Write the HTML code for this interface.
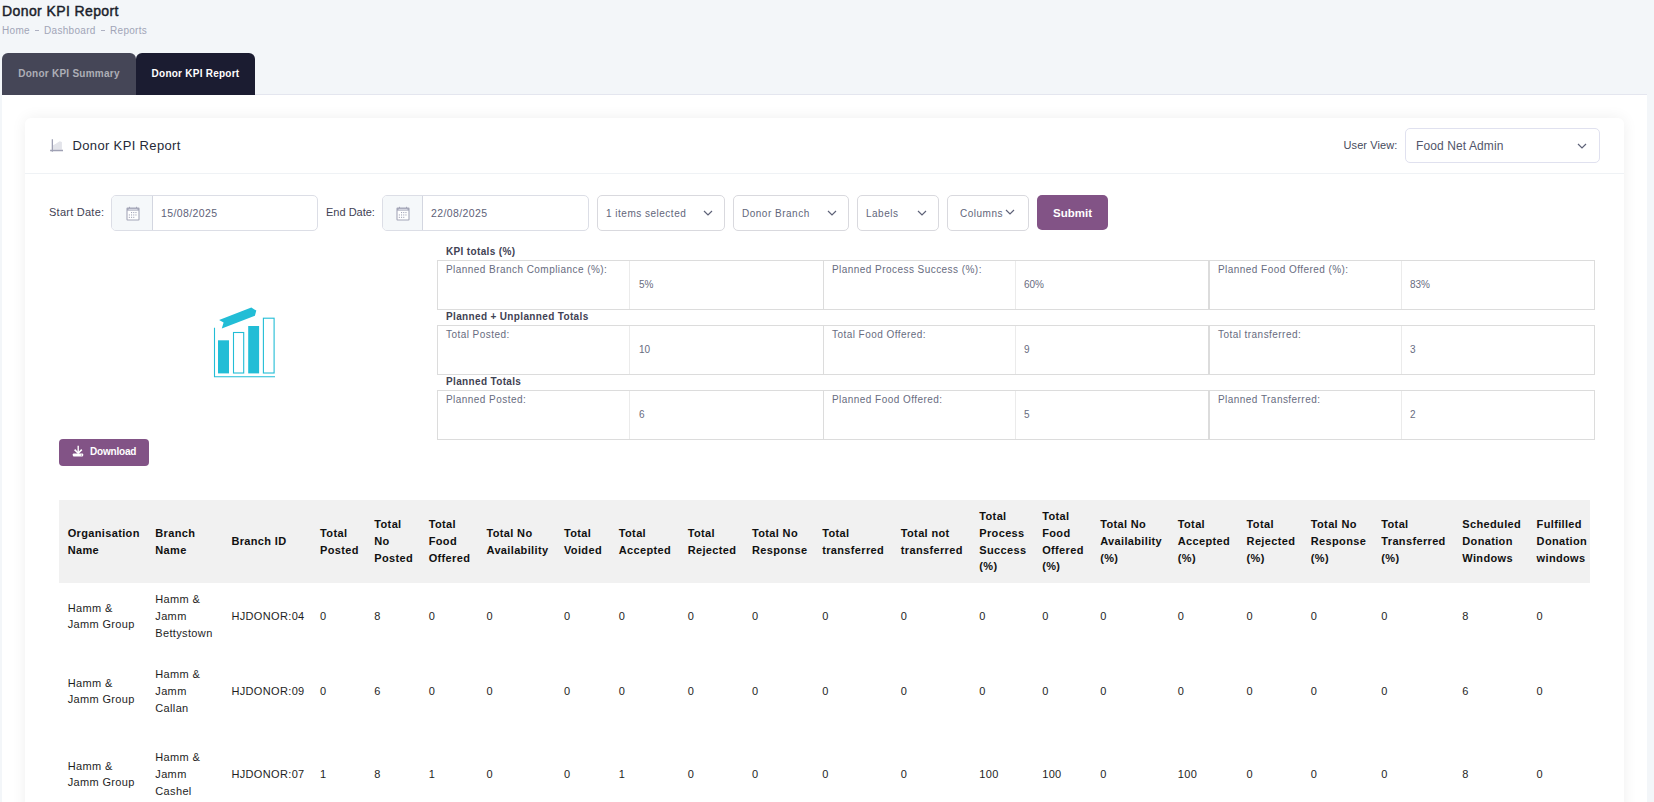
<!DOCTYPE html>
<html><head><meta charset="utf-8">
<style>
*{box-sizing:border-box;margin:0;padding:0}
html,body{width:1654px;height:802px;overflow:hidden}
body{background:#f3f6f9;font-family:"Liberation Sans",sans-serif;position:relative;color:#3f4254}
.abs{position:absolute;white-space:nowrap}
#title{left:2px;top:3px;font-size:14px;font-weight:normal;color:#1b1e2b;line-height:17px;-webkit-text-stroke:0.45px #1b1e2b;letter-spacing:0.4px}
.bc{top:25.2px;font-size:10px;color:#a1a5b7;line-height:12px;letter-spacing:0.3px}
.tab{position:absolute;top:53px;height:42px;border-radius:6px 6px 0 0;font-size:10px;font-weight:bold;line-height:42.4px;text-align:center;letter-spacing:0.25px}
#tab1{left:2px;width:134px;background:#454657;color:#adaeb6}
#tab2{left:136px;width:119px;background:#1b1c31;color:#fff}
#panel{position:absolute;left:2px;top:95px;width:1645px;height:720px;background:#fff}
#tabline{position:absolute;left:255px;top:94px;width:1392px;height:1px;background:#e4e6ef}
#card{position:absolute;left:25px;top:118px;width:1599px;height:700px;background:#fff;border-radius:6px;box-shadow:0 0 15px 0 rgba(0,0,0,.065)}
#chead{position:absolute;left:0;top:0;width:1599px;height:56px;border-bottom:1px solid #eff2f5}

.lbl{font-size:11px;color:#3f4254;line-height:14px;letter-spacing:0.25px}
.sel{position:absolute;top:195px;height:36px;border:1px solid #d9d9de;border-radius:5px;background:#fff}
.sel span{position:absolute;left:8px;top:11px;font-size:10px;line-height:13px;color:#62667a;white-space:nowrap;letter-spacing:0.5px}
.chev{position:absolute;top:14px;width:10px;height:6px;margin-left:-0.6px}
.grp{position:absolute;top:195px;height:36px;border:1px solid #dcdee6;border-radius:5px;background:#fff;overflow:hidden}
.addon{position:absolute;left:0;top:0;width:40px;height:34px;background:#f5f8fa;border-right:1px solid #d3d6e0}
.addon svg{position:absolute;left:12.5px;top:9.5px}
.grp span{position:absolute;left:48px;top:11px;font-size:10.5px;line-height:13px;color:#5e6278;letter-spacing:0.4px}
.btn{position:absolute;background:#825386;color:#fff;font-weight:bold;border-radius:5px;text-align:center}

.kh{position:absolute;left:446px;font-size:10px;font-weight:bold;line-height:12px;letter-spacing:0.35px;color:#3f4254;white-space:nowrap}
.kt{position:absolute;left:437px;width:1158px;height:50px;border:1px solid #dcdcdc;background:#fff}
.kt .v{position:absolute;top:0;width:1px;height:48px;background:#ebebeb}
.kt .d{position:absolute;top:0;width:1px;height:48px;background:#dcdcdc}
.kt .l{position:absolute;top:2.5px;font-size:10px;line-height:12px;letter-spacing:0.45px;color:#686c80;white-space:nowrap}
.kt .n{position:absolute;top:18.3px;font-size:10px;line-height:12px;color:#686c80;white-space:nowrap}

.th{position:absolute;top:500px;height:83px;display:flex;align-items:center;font-size:11px;font-weight:bold;line-height:16.8px;color:#101010;white-space:nowrap;letter-spacing:0.35px}
.td{position:absolute;display:flex;align-items:center;font-size:11px;line-height:17px;color:#1e1e1e;white-space:nowrap;letter-spacing:0.35px;padding-bottom:0.6px}
</style></head><body>
<div id="title" class="abs">Donor KPI Report</div>
<div class="abs bc" style="left:2px">Home</div><div class="abs" style="left:35px;top:29.5px;width:4px;height:1.6px;background:#aeb1c2"></div><div class="abs bc" style="left:44px">Dashboard</div><div class="abs" style="left:101px;top:29.5px;width:4px;height:1.6px;background:#aeb1c2"></div><div class="abs bc" style="left:110px">Reports</div>
<div id="tab1" class="tab">Donor KPI Summary</div>
<div id="tab2" class="tab">Donor KPI Report</div>
<div id="tabline"></div>
<div id="panel"></div>
<div id="card">
  <div id="chead"></div>
</div>

<svg class="abs" style="left:49px;top:138px" width="16" height="16" viewBox="0 0 16 16"><path d="M4 11.8 L4 7.2 C6 6.5 8 5 9.6 4 L10.8 3.3 L12.9 4 L12.9 11.8 Z" fill="#e3e4ea"/><path d="M3.36 1.3 L3.36 13.8 M1.1 12.5 L14 12.5" stroke="#9fa1b4" stroke-width="1.3" fill="none"/></svg>
<div class="abs" style="left:72.5px;top:138px;font-size:13px;line-height:15px;color:#262a38;letter-spacing:0.35px">Donor KPI Report</div>
<div class="abs lbl" style="left:1343.5px;top:138px;letter-spacing:0.1px;color:#464a5c">User View:</div>
<div class="sel" style="left:1405px;top:128px;width:195px;height:35px;border-color:#e0e1ef"><span style="top:9.6px;left:10px;font-size:12px;line-height:14px;color:#52566a;letter-spacing:0.1px">Food Net Admin</span><svg class="chev" style="left:172px" viewBox="0 0 10 6"><path d="M1 1 L5 5 L9 1" fill="none" stroke="#5e6278" stroke-width="1.2"/></svg></div>

<div class="abs lbl" style="left:49px;top:204.5px">Start Date:</div>
<div class="grp" style="left:111px;width:207px"><div class="addon" style="width:41px"><svg style="left:13.5px" width="14" height="15" viewBox="0 0 14 15"><rect x="1" y="2" width="12" height="12" rx="0.5" fill="#fff" stroke="#a4a6b8" stroke-width="1.1"/><rect x="1" y="2" width="12" height="2.6" fill="#a4a6b8"/><rect x="2.5" y="2.9" width="9" height="0.9" fill="#dfe0ea"/><line x1="3.5" y1="0.8" x2="3.5" y2="2.2" stroke="#a4a6b8"/><line x1="10.5" y1="0.8" x2="10.5" y2="2.2" stroke="#a4a6b8"/><g fill="#a4a6b8"><rect x="5" y="6" width="1.1" height="1.1"/><rect x="7.2" y="6" width="1.1" height="1.1"/><rect x="9.4" y="6" width="1.1" height="1.1"/><rect x="2.8" y="8.4" width="1.1" height="1.1"/><rect x="5" y="8.4" width="1.1" height="1.1"/><rect x="7.2" y="8.4" width="1.1" height="1.1"/><rect x="9.4" y="8.4" width="1.1" height="1.1"/><rect x="2.8" y="10.8" width="1.1" height="1.1"/><rect x="5" y="10.8" width="1.1" height="1.1"/><rect x="7.2" y="10.8" width="1.1" height="1.1"/></g></svg></div><span style="left:49px">15/08/2025</span></div>
<div class="abs lbl" style="left:326px;top:204.5px;letter-spacing:0">End Date:</div>
<div class="grp" style="left:382px;width:207px"><div class="addon"><svg width="14" height="15" viewBox="0 0 14 15"><rect x="1" y="2" width="12" height="12" rx="0.5" fill="#fff" stroke="#a4a6b8" stroke-width="1.1"/><rect x="1" y="2" width="12" height="2.6" fill="#a4a6b8"/><rect x="2.5" y="2.9" width="9" height="0.9" fill="#dfe0ea"/><line x1="3.5" y1="0.8" x2="3.5" y2="2.2" stroke="#a4a6b8"/><line x1="10.5" y1="0.8" x2="10.5" y2="2.2" stroke="#a4a6b8"/><g fill="#a4a6b8"><rect x="5" y="6" width="1.1" height="1.1"/><rect x="7.2" y="6" width="1.1" height="1.1"/><rect x="9.4" y="6" width="1.1" height="1.1"/><rect x="2.8" y="8.4" width="1.1" height="1.1"/><rect x="5" y="8.4" width="1.1" height="1.1"/><rect x="7.2" y="8.4" width="1.1" height="1.1"/><rect x="9.4" y="8.4" width="1.1" height="1.1"/><rect x="2.8" y="10.8" width="1.1" height="1.1"/><rect x="5" y="10.8" width="1.1" height="1.1"/><rect x="7.2" y="10.8" width="1.1" height="1.1"/></g></svg></div><span>22/08/2025</span></div>
<div class="sel" style="left:597px;width:128px"><span>1 items selected</span><svg class="chev" style="left:106px" viewBox="0 0 10 6"><path d="M1 1 L5 5 L9 1" fill="none" stroke="#5e6278" stroke-width="1.2"/></svg></div>
<div class="sel" style="left:733px;width:116px"><span>Donor Branch</span><svg class="chev" style="left:94px" viewBox="0 0 10 6"><path d="M1 1 L5 5 L9 1" fill="none" stroke="#5e6278" stroke-width="1.2"/></svg></div>
<div class="sel" style="left:857px;width:82px"><span>Labels</span><svg class="chev" style="left:60px" viewBox="0 0 10 6"><path d="M1 1 L5 5 L9 1" fill="none" stroke="#5e6278" stroke-width="1.2"/></svg></div>
<div class="sel" style="left:947px;width:82px"><span style="left:12px">Columns</span><svg class="chev" style="left:58px;top:13px" viewBox="0 0 10 6"><path d="M1 1 L5 5 L9 1" fill="none" stroke="#5e6278" stroke-width="1.2"/></svg></div>
<div class="btn" style="left:1037px;top:195px;width:71px;height:35px;line-height:36px;font-size:11.5px">Submit</div>

<div class="kh" style="top:246px">KPI totals (%)</div>
<div class="kt" style="top:260px"><div class="v" style="left:191px"></div><div class="d" style="left:385px"></div><div class="v" style="left:577px"></div><div class="d" style="left:770px;width:2px"></div><div class="v" style="left:963px"></div><div class="l" style="left:8px">Planned Branch Compliance (%):</div><div class="n" style="left:201px">5%</div><div class="l" style="left:394px">Planned Process Success (%):</div><div class="n" style="left:586px">60%</div><div class="l" style="left:780px">Planned Food Offered (%):</div><div class="n" style="left:972px">83%</div></div>
<div class="kh" style="top:311px">Planned + Unplanned Totals</div>
<div class="kt" style="top:325px"><div class="v" style="left:191px"></div><div class="d" style="left:385px"></div><div class="v" style="left:577px"></div><div class="d" style="left:770px;width:2px"></div><div class="v" style="left:963px"></div><div class="l" style="left:8px">Total Posted:</div><div class="n" style="left:201px">10</div><div class="l" style="left:394px">Total Food Offered:</div><div class="n" style="left:586px">9</div><div class="l" style="left:780px">Total transferred:</div><div class="n" style="left:972px">3</div></div>
<div class="kh" style="top:376px">Planned Totals</div>
<div class="kt" style="top:390px"><div class="v" style="left:191px"></div><div class="d" style="left:385px"></div><div class="v" style="left:577px"></div><div class="d" style="left:770px;width:2px"></div><div class="v" style="left:963px"></div><div class="l" style="left:8px">Planned Posted:</div><div class="n" style="left:201px">6</div><div class="l" style="left:394px">Planned Food Offered:</div><div class="n" style="left:586px">5</div><div class="l" style="left:780px">Planned Transferred:</div><div class="n" style="left:972px">2</div></div>
<svg class="abs" style="left:200px;top:300px" width="90" height="90" viewBox="200 300 90 90">
<g fill="#22bdd6" stroke="none">
<polygon points="219.1,319.9 251.3,307.6 256.3,310.6 254.9,315.8 221.8,328.4 223.6,322.6"/>
<rect x="218" y="340.3" width="11" height="33.1"/>
<rect x="248.2" y="326" width="10.9" height="47.4"/>
</g>
<g fill="none" stroke="#22bdd6" stroke-width="1.1">
<rect x="233.5" y="332.5" width="10.2" height="40.5"/>
<rect x="263.4" y="318.2" width="10.7" height="54.8"/>
<path d="M214.5 327.7 V376.8 H275"/>
</g></svg><div class="btn" style="left:59px;top:439px;width:90px;height:27px;border-radius:4px"><svg style="position:absolute;left:13px;top:6px" width="12" height="12" viewBox="0 0 12 12"><path d="M6.2 0.8 V8" stroke="#fff" stroke-width="1.4" fill="none"/><path d="M2.6 4.6 L6.2 8.2 L9.8 4.6" stroke="#fff" stroke-width="1.6" fill="none"/><rect x="0.8" y="8.4" width="10.4" height="3" rx="0.8" fill="#fff"/><circle cx="9.3" cy="9.9" r="0.5" fill="#825386"/></svg><span style="position:absolute;left:31px;top:6px;font-size:10px;line-height:14px;letter-spacing:-0.2px">Download</span></div><div style="position:absolute;left:59px;top:500px;width:1531px;height:83px;background:#f1f1f1"></div><div class="th" style="left:67.7px">Organisation<br>Name</div><div class="th" style="left:155.3px">Branch<br>Name</div><div class="th" style="left:231.4px">Branch ID</div><div class="th" style="left:320.1px">Total<br>Posted</div><div class="th" style="left:374.3px">Total<br>No<br>Posted</div><div class="th" style="left:428.7px">Total<br>Food<br>Offered</div><div class="th" style="left:486.5px">Total No<br>Availability</div><div class="th" style="left:564px">Total<br>Voided</div><div class="th" style="left:618.8px">Total<br>Accepted</div><div class="th" style="left:687.7px">Total<br>Rejected</div><div class="th" style="left:752px">Total No<br>Response</div><div class="th" style="left:822.2px">Total<br>transferred</div><div class="th" style="left:900.8px">Total not<br>transferred</div><div class="th" style="left:979.3px">Total<br>Process<br>Success<br>(%)</div><div class="th" style="left:1042.2px">Total<br>Food<br>Offered<br>(%)</div><div class="th" style="left:1100.2px">Total No<br>Availability<br>(%)</div><div class="th" style="left:1177.8px">Total<br>Accepted<br>(%)</div><div class="th" style="left:1246.6px">Total<br>Rejected<br>(%)</div><div class="th" style="left:1310.8px">Total No<br>Response<br>(%)</div><div class="th" style="left:1381.3px">Total<br>Transferred<br>(%)</div><div class="th" style="left:1462.3px">Scheduled<br>Donation<br>Windows</div><div class="th" style="left:1536.6px">Fulfilled<br>Donation<br>windows</div><div class="td" style="line-height:16px;left:67.7px;top:583px;height:67px">Hamm &amp;<br>Jamm Group</div><div class="td" style="left:155.3px;top:583px;height:67px">Hamm &amp;<br>Jamm<br>Bettystown</div><div class="td" style="left:231.4px;top:583px;height:67px">HJDONOR:04</div><div class="td" style="left:320.1px;top:583px;height:67px">0</div><div class="td" style="left:374.3px;top:583px;height:67px">8</div><div class="td" style="left:428.7px;top:583px;height:67px">0</div><div class="td" style="left:486.5px;top:583px;height:67px">0</div><div class="td" style="left:564px;top:583px;height:67px">0</div><div class="td" style="left:618.8px;top:583px;height:67px">0</div><div class="td" style="left:687.7px;top:583px;height:67px">0</div><div class="td" style="left:752px;top:583px;height:67px">0</div><div class="td" style="left:822.2px;top:583px;height:67px">0</div><div class="td" style="left:900.8px;top:583px;height:67px">0</div><div class="td" style="left:979.3px;top:583px;height:67px">0</div><div class="td" style="left:1042.2px;top:583px;height:67px">0</div><div class="td" style="left:1100.2px;top:583px;height:67px">0</div><div class="td" style="left:1177.8px;top:583px;height:67px">0</div><div class="td" style="left:1246.6px;top:583px;height:67px">0</div><div class="td" style="left:1310.8px;top:583px;height:67px">0</div><div class="td" style="left:1381.3px;top:583px;height:67px">0</div><div class="td" style="left:1462.3px;top:583px;height:67px">8</div><div class="td" style="left:1536.6px;top:583px;height:67px">0</div><div class="td" style="line-height:16px;left:67.7px;top:650px;height:83px">Hamm &amp;<br>Jamm Group</div><div class="td" style="left:155.3px;top:650px;height:83px">Hamm &amp;<br>Jamm<br>Callan</div><div class="td" style="left:231.4px;top:650px;height:83px">HJDONOR:09</div><div class="td" style="left:320.1px;top:650px;height:83px">0</div><div class="td" style="left:374.3px;top:650px;height:83px">6</div><div class="td" style="left:428.7px;top:650px;height:83px">0</div><div class="td" style="left:486.5px;top:650px;height:83px">0</div><div class="td" style="left:564px;top:650px;height:83px">0</div><div class="td" style="left:618.8px;top:650px;height:83px">0</div><div class="td" style="left:687.7px;top:650px;height:83px">0</div><div class="td" style="left:752px;top:650px;height:83px">0</div><div class="td" style="left:822.2px;top:650px;height:83px">0</div><div class="td" style="left:900.8px;top:650px;height:83px">0</div><div class="td" style="left:979.3px;top:650px;height:83px">0</div><div class="td" style="left:1042.2px;top:650px;height:83px">0</div><div class="td" style="left:1100.2px;top:650px;height:83px">0</div><div class="td" style="left:1177.8px;top:650px;height:83px">0</div><div class="td" style="left:1246.6px;top:650px;height:83px">0</div><div class="td" style="left:1310.8px;top:650px;height:83px">0</div><div class="td" style="left:1381.3px;top:650px;height:83px">0</div><div class="td" style="left:1462.3px;top:650px;height:83px">6</div><div class="td" style="left:1536.6px;top:650px;height:83px">0</div><div class="td" style="line-height:16px;left:67.7px;top:733px;height:83px">Hamm &amp;<br>Jamm Group</div><div class="td" style="left:155.3px;top:733px;height:83px">Hamm &amp;<br>Jamm<br>Cashel</div><div class="td" style="left:231.4px;top:733px;height:83px">HJDONOR:07</div><div class="td" style="left:320.1px;top:733px;height:83px">1</div><div class="td" style="left:374.3px;top:733px;height:83px">8</div><div class="td" style="left:428.7px;top:733px;height:83px">1</div><div class="td" style="left:486.5px;top:733px;height:83px">0</div><div class="td" style="left:564px;top:733px;height:83px">0</div><div class="td" style="left:618.8px;top:733px;height:83px">1</div><div class="td" style="left:687.7px;top:733px;height:83px">0</div><div class="td" style="left:752px;top:733px;height:83px">0</div><div class="td" style="left:822.2px;top:733px;height:83px">0</div><div class="td" style="left:900.8px;top:733px;height:83px">0</div><div class="td" style="left:979.3px;top:733px;height:83px">100</div><div class="td" style="left:1042.2px;top:733px;height:83px">100</div><div class="td" style="left:1100.2px;top:733px;height:83px">0</div><div class="td" style="left:1177.8px;top:733px;height:83px">100</div><div class="td" style="left:1246.6px;top:733px;height:83px">0</div><div class="td" style="left:1310.8px;top:733px;height:83px">0</div><div class="td" style="left:1381.3px;top:733px;height:83px">0</div><div class="td" style="left:1462.3px;top:733px;height:83px">8</div><div class="td" style="left:1536.6px;top:733px;height:83px">0</div></body></html>
